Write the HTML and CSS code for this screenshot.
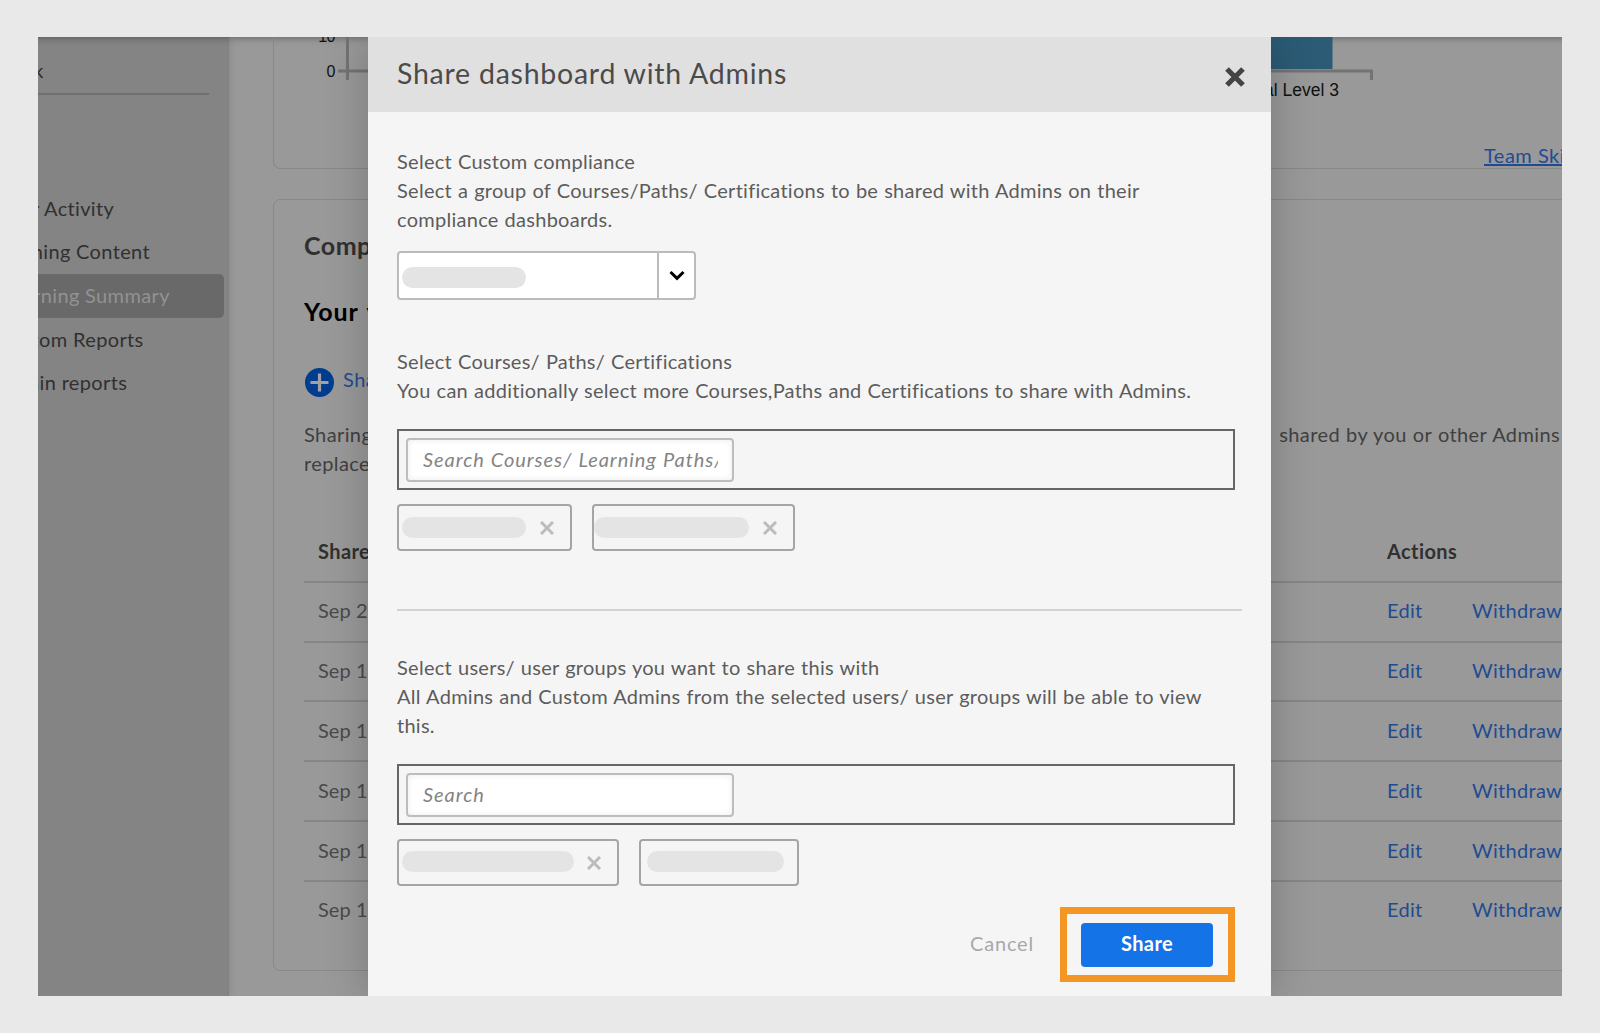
FILE: index.html
```html
<!DOCTYPE html>
<html lang="en">
<head>
<meta charset="utf-8">
<title>Share dashboard with Admins</title>
<link rel="stylesheet" href="styles.css">
</head>
<body>
<div class="frame">
  <nav class="sidebar">
    <div class="back">Back</div>
    <ul class="menu">
      <li class="shift-4">User Activity</li>
      <li class="shift-8">Learning Content</li>
      <li class="active">Learning Summary</li>
      <li class="shift-4">Custom Reports</li>
      <li class="shift-4">Admin reports</li>
    </ul>
  </nav>
  <main class="main">
    <section class="card chart-card">
      <svg class="chart" width="1290" height="70" viewBox="0 0 1290 70">
        <rect x="980" y="0" width="78.500" height="32" fill="#2b5b75"/>
        <path d="M64 34H1097.500V43M73.500 0V43" fill="none" stroke="#737373" stroke-width="3"/>
        <text class="tick" x="60.500" y="4.500" text-anchor="end">10</text>
        <text class="tick" x="60.500" y="39.500" text-anchor="end">0</text>
        <text x="1065" y="59" text-anchor="end">Professional Level 3</text>
      </svg>
      <a class="team-link">Team Skills</a>
    </section>
    <section class="card compliance">
      <h2>Compliance Dashboard</h2>
      <h3>Your view</h3>
      <div class="share-link">
        <svg width="29" height="29" viewBox="0 0 29 29"><circle cx="14.500" cy="14.500" r="14.500" fill="#003d8f"/><path d="M14.500 5.500v18M5.500 14.500h18" stroke="#a2a2a2" stroke-width="3.200"/></svg>
        <span>Share</span>
      </div>
      <div class="note">
        <p>Sharing<br>replace</p>
        <p class="note-end">shared by you or other Admins</p>
      </div>
      <div class="table">
        <div class="row head"><span>Shared</span><span>Actions</span></div>
        <div class="row"><span>Sep 20</span><a>Edit</a><a>Withdraw</a></div>
        <div class="row"><span>Sep 19</span><a>Edit</a><a>Withdraw</a></div>
        <div class="row"><span>Sep 19</span><a>Edit</a><a>Withdraw</a></div>
        <div class="row"><span>Sep 19</span><a>Edit</a><a>Withdraw</a></div>
        <div class="row"><span>Sep 19</span><a>Edit</a><a>Withdraw</a></div>
        <div class="row"><span>Sep 17</span><a>Edit</a><a>Withdraw</a></div>
      </div>
    </section>
  </main>

  <div class="modal">
    <header class="modal-head">
      <h1>Share dashboard with Admins</h1>
      <svg width="22" height="22" viewBox="0 0 22 22"><path d="M3 3l16 16M19 3L3 19" stroke="#444" stroke-width="5.200"/></svg>
    </header>
    <div class="modal-body">
      <p class="l1">Select Custom compliance<br>Select a group of Courses/Paths/ Certifications to be shared with Admins on their<br>compliance dashboards.</p>
      <div class="select">
        <div class="value"><i class="pill p124"></i></div>
        <div class="arrow"><svg width="16" height="11" viewBox="0 0 16 11"><path d="M1.500 2l6.500 6.300L14.500 2" fill="none" stroke="#000" stroke-width="3"/></svg></div>
      </div>
      <p class="l2">Select Courses/ Paths/ Certifications<br>You can additionally select more Courses,Paths and Certifications to share with Admins.</p>
      <div class="search"><div class="input"><span>Search Courses/ Learning Paths/</span></div></div>
      <div class="chips">
        <div class="chip w175"><i class="pill p124"></i><svg width="14" height="14" viewBox="0 0 14 14"><path d="M1 1l12 12M13 1L1 13"/></svg></div>
        <div class="chip w203"><i class="pill p155"></i><svg width="14" height="14" viewBox="0 0 14 14"><path d="M1 1l12 12M13 1L1 13"/></svg></div>
      </div>
      <hr>
      <p class="l3">Select users/ user groups you want to share this with<br>All Admins and Custom Admins from the selected users/ user groups will be able to view<br>this.</p>
      <div class="search"><div class="input"><span>Search</span></div></div>
      <div class="chips">
        <div class="chip w221"><i class="pill p172"></i><svg width="14" height="14" viewBox="0 0 14 14"><path d="M1 1l12 12M13 1L1 13"/></svg></div>
        <div class="chip w160"><i class="pill p137"></i></div>
      </div>
      <footer class="actions">
        <span class="cancel">Cancel</span>
        <div class="highlight"><div class="share-btn">Share</div></div>
      </footer>
    </div>
  </div>
</div>
</body>
</html>
```

FILE: styles.css
```css
* { box-sizing: border-box; }
body {
  margin: 0;
  padding: 37px 38px;
  height: 1033px;
  overflow: hidden;
  background: #e9e9e9;
  font-family: Lato, "Liberation Sans", sans-serif;
  font-size: 20px;
  color: #5c5c5c;
}
h1, h2, h3, p, ul { margin: 0; padding: 0; font-weight: 400; }
.frame {
  position: relative;
  display: flex;
  width: 1524px;
  height: 959px;
  overflow: hidden;
  background: #999;
}

/* sidebar */
.sidebar {
  flex: none;
  width: 191px;
  background: #848484;
  box-shadow: 0 0 8px rgba(0,0,0,.12), inset 0 8px 8px -8px rgba(0,0,0,.4);
  color: #303030;
  white-space: nowrap;
  letter-spacing: .35px;
}
.back {
  width: 171px;
  height: 58px;
  padding-top: 21px;
  border-bottom: 2px solid #707070;
  text-indent: -38px;
}
.menu { list-style: none; padding-top: 91.500px; }
.menu li { height: 43.700px; line-height: 42px; text-indent: -37px; }
.menu .shift-4 { text-indent: -40.500px; }
.menu .shift-8 { text-indent: -45px; }
.menu .active {
  width: 185.500px;
  background: #696969;
  border-radius: 0 5px 5px 0;
  color: #929292;
  text-indent: -36px;
}

/* dimmed page */
.main { flex: none; width: 1500px; padding-left: 44px; box-shadow: inset 0 8px 8px -8px rgba(0,0,0,.4); }
.card { width: 1400px; border: 1.500px solid #888; border-radius: 7px; }
.chart-card { height: 132px; border-top: 0; border-radius: 0 0 7px 7px; }
.chart { display: block; }
.chart text { font: 17.500px "Liberation Sans", sans-serif; fill: #111; }
.chart .tick { font-size: 16px; letter-spacing: -.8px; }
.team-link {
  display: block;
  margin: 36px 0 0 1210px;
  line-height: 25px;
  color: #1f4c91;
  text-decoration: underline;
  letter-spacing: .5px;
}
.compliance { margin-top: 30px; height: 772px; padding: 30px 0 0 30px; white-space: nowrap; }
.compliance h2 { font-size: 25px; line-height: 30px; font-weight: 700; color: #303030; letter-spacing: .5px; }
.compliance h3 { margin-top: 36px; font-size: 25px; line-height: 30px; font-weight: 700; color: #000; letter-spacing: .9px; word-spacing: 2px; }
.share-link { display: flex; gap: 9px; margin: 42px 0 0 1px; color: #1f4c91; letter-spacing: .5px; }
.share-link span { line-height: 23px; }
.note { display: flex; margin-top: 23px; line-height: 29.200px; color: #404040; letter-spacing: .4px; word-spacing: .5px; }
.note-end { margin-left: 907px; }
.table { margin-top: 44.500px; }
.row {
  display: grid;
  grid-template-columns: 1069px 85px 1fr;
  align-items: center;
  height: 59.850px;
  padding: 0 0 3px 14px;
  border-bottom: 2px solid #868686;
  color: #4a4a4a;
  letter-spacing: .05px;
}
.row a { color: #1f4c91; letter-spacing: .3px; }
.row:last-child { border-color: transparent; }
.head { padding-bottom: 1px; font-weight: 700; color: #303030; letter-spacing: .4px; }

/* dialog */
.modal {
  position: absolute;
  left: 330px;
  top: 0;
  width: 903px;
  height: 959px;
  background: #f5f5f5;
  box-shadow: 0 0 40px rgba(0,0,0,.22);
}
.modal-head {
  display: flex;
  justify-content: space-between;
  align-items: center;
  height: 75px;
  padding: 0 25px 0 29px;
  background: #e0e0e0;
  color: #4b4b4b;
}
.modal-head svg { margin-top: 5px; }
.modal-head h1 { font-size: 28.500px; line-height: 34px; margin-bottom: 4px; letter-spacing: .75px; }
.modal-body { padding: 34.500px 28px 0 29px; }
.modal-body p { line-height: 29.200px; white-space: nowrap; letter-spacing: .27px; word-spacing: .6px; }
.select {
  display: flex;
  width: 299px;
  height: 49px;
  margin-top: 17px;
  border: 2px solid #bbb;
  border-radius: 4px;
  background: #fff;
}
.value { display: flex; align-items: center; width: 260px; padding: 4px 0 0 3px; border-right: 2px solid #bbb; }
.arrow { flex: 1; display: flex; align-items: center; justify-content: center; }
.pill { display: block; height: 21px; border-radius: 11px; background: #e4e4e4; }
.p124 { width: 124px; }
.p155 { width: 155px; }
.p172 { width: 172px; }
.p137 { width: 137px; }
.l2 { margin-top: 47px; }
.search { width: 838px; height: 61px; margin-top: 23px; padding: 7px; border: 2px solid #666; }
.input {
  width: 328px;
  height: 44px;
  padding: 0 14px 0 15px;
  border: 2px solid #bdbdbd;
  border-radius: 4px;
  background: #fff;
  box-shadow: inset 0 0 6px rgba(0,0,0,.08);
  line-height: 39px;
  font-style: italic;
  color: #848484;
}
.input span { display: block; overflow: hidden; white-space: nowrap; letter-spacing: .95px; word-spacing: .5px; }
.chips { display: flex; gap: 20px; margin-top: 14.500px; }
.chip {
  display: flex;
  align-items: center;
  gap: 14px;
  height: 47px;
  padding-left: 3px;
  border: 2px solid #a5a5a5;
  border-radius: 4px;
}
.chip svg { fill: none; stroke: #bcbcbc; stroke-width: 3; }
.w175 { width: 175px; }
.w203 { width: 203px; padding-left: 0; }
.w221 { width: 222px; gap: 12.500px; }
.w221 .pill, .w160 .pill { margin-bottom: 2px; }
.w160 { width: 160px; padding-left: 6px; }
hr { width: 845px; height: 2px; margin: 57.500px 0 0; border: 0; background: #d2d2d2; }
.l3 { margin-top: 42px; }
.l3 + .search { margin-top: 23.500px; }
.actions { display: flex; justify-content: flex-end; align-items: center; gap: 26px; width: 838px; margin-top: 21px; }
.cancel { margin-bottom: 3px; color: #a8a8a8; letter-spacing: .8px; }
.highlight { width: 175px; height: 75px; padding: 9px 14px; border: 7px solid #f39624; }
.share-btn { width: 132px; height: 44px; border-radius: 4px; background: #1473e6; color: #fff; font-weight: 700; text-align: center; line-height: 41px; letter-spacing: .4px; }
```
